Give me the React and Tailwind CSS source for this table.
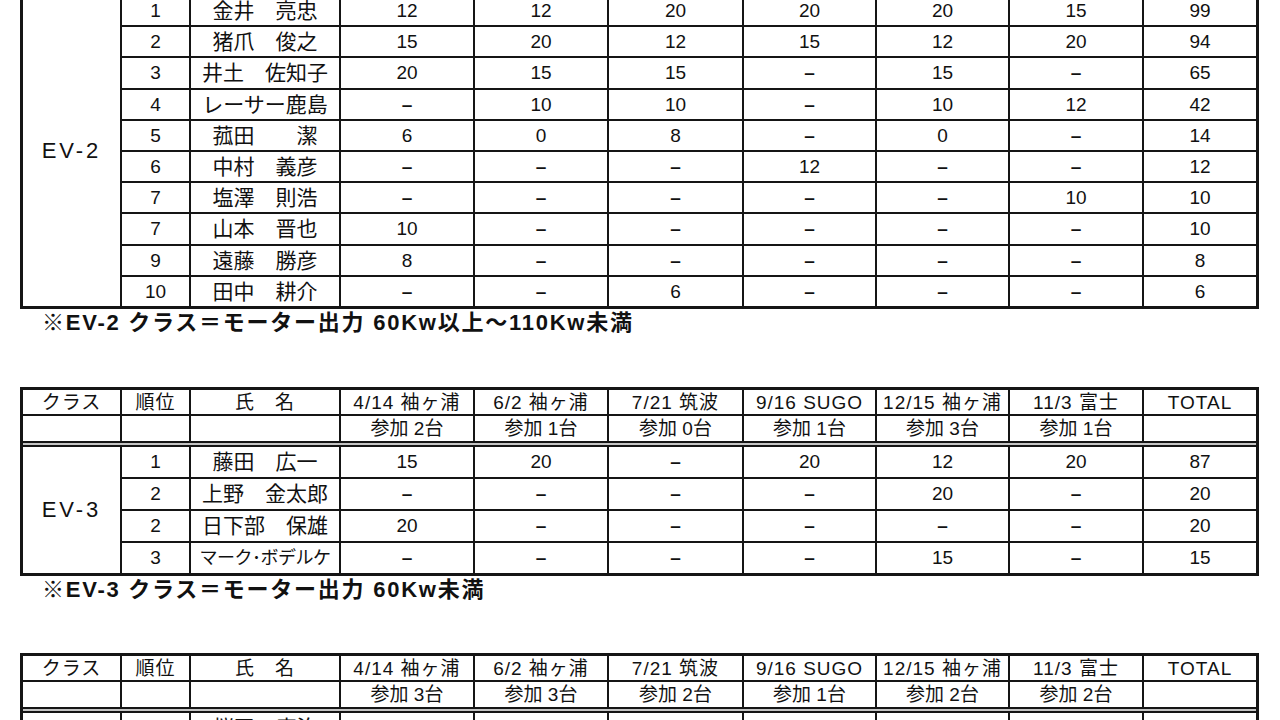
import clsx from 'clsx'

const heads = ['クラス', '順位', '氏　名', '4/14 袖ヶ浦', '6/2 袖ヶ浦', '7/21 筑波', '9/16 SUGO', '12/15 袖ヶ浦', '11/3 富士', 'TOTAL']

const ev2 = [
  ['1', '金井　亮忠', '12', '12', '20', '20', '20', '15', '99'],
  ['2', '猪爪　俊之', '15', '20', '12', '15', '12', '20', '94'],
  ['3', '井土　佐知子', '20', '15', '15', '-', '15', '-', '65'],
  ['4', 'レーサー鹿島', '-', '10', '10', '-', '10', '12', '42'],
  ['5', '菰田　　潔', '6', '0', '8', '-', '0', '-', '14'],
  ['6', '中村　義彦', '-', '-', '-', '12', '-', '-', '12'],
  ['7', '塩澤　則浩', '-', '-', '-', '-', '-', '10', '10'],
  ['7', '山本　晋也', '10', '-', '-', '-', '-', '-', '10'],
  ['9', '遠藤　勝彦', '8', '-', '-', '-', '-', '-', '8'],
  ['10', '田中　耕介', '-', '-', '6', '-', '-', '-', '6'],
]

const ev3 = [
  ['1', '藤田　広一', '15', '20', '-', '20', '12', '20', '87'],
  ['2', '上野　金太郎', '-', '-', '-', '-', '20', '-', '20'],
  ['2', '日下部　保雄', '20', '-', '-', '-', '-', '-', '20'],
  ['3', 'マーク･ボデルケ', '-', '-', '-', '-', '15', '-', '15'],
]

const ev4 = [
  ['1', '桜田　康治', '15', '15', '20', '-', '8', '-', '58'],
  ['2', '-', '-', '-', '-', '-', '-', '-', '-'],
  ['3', '-', '-', '-', '-', '-', '-', '-', '-'],
]

function Cell({ children, className }) {
  return (
    <div className={clsx('bg-white flex items-center justify-center overflow-hidden whitespace-nowrap leading-none', className)}>
      {children}
    </div>
  )
}

function Val({ v }) {
  if (v === '-') return <span className="font-bold text-[19px]">–</span>
  return <span className="text-[19px]">{v}</span>
}

function Table({ label, counts, rows, rowH, span }) {
  return (
    <div className="grid w-[1239px] grid-cols-[97px_67px_148px_132px_132px_133px_131px_131px_132px_112px] gap-[2px] border-[3px] border-[#151515] bg-[#151515]">
      {counts && (
        <>
          {heads.map((h, i) => (
            <Cell key={'h' + i} className="h-[24px] items-end pb-[2px] text-[19px] tracking-[1px]">
              {h}
            </Cell>
          ))}
          {['', '', ''].concat(counts.map((c) => `参加 ${c}台`), ['']).map((c, i) => (
            <Cell key={'c' + i} className="h-[25px] text-[19px]">
              {c}
            </Cell>
          ))}
          <div className="col-span-10 h-[2px] bg-[#c4c4c4]" />
        </>
      )}
      <Cell className={clsx('text-[22px] tracking-[3px]', span)}>{label}</Cell>
      {rows.map((r, ri) =>
        r.map((v, ci) => (
          <Cell key={ri + '-' + ci} className={rowH}>
            {ci === 1 ? (
              <span className={v.length > 7 ? 'text-[18px] tracking-[-0.5px]' : 'text-[21px]'}>{v === '-' ? '' : v}</span>
            ) : (
              <Val v={v} />
            )}
          </Cell>
        ))
      )}
    </div>
  )
}

function Note({ children }) {
  return <div className="mt-[4px] h-[20px] pl-[22px] text-[22px] font-bold leading-[20px] tracking-[1.75px]">{children}</div>
}

export default function App() {
  return (
    <div className="h-[720px] overflow-hidden bg-white pl-[20px] text-[#111] font-['Liberation_Sans','Noto_Sans_CJK_JP',sans-serif]">
      <div className="mt-[-7px]">
        <Table label="EV-2" rows={ev2} rowH="h-[29.2px]" span="row-span-10" />
      </div>
      <Note>※EV-2 クラス＝モーター出力 60Kw以上～110Kw未満</Note>

      <div className="mt-[54px]">
        <Table label="EV-3" counts={['2', '1', '0', '1', '3', '1']} rows={ev3} rowH="h-[30px]" span="row-span-4" />
      </div>
      <Note>※EV-3 クラス＝モーター出力 60Kw未満</Note>

      <div className="mt-[53px]">
        <Table label="EV-4" counts={['3', '3', '2', '1', '2', '2']} rows={ev4} rowH="h-[30px]" span="row-span-3" />
      </div>
    </div>
  )
}
